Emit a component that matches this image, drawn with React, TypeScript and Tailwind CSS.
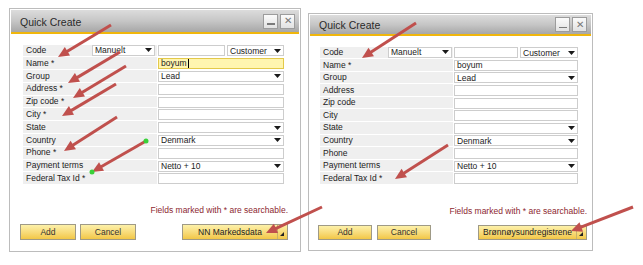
import React from 'react';

type Field = {
  label: string;
  kind: 'text' | 'select';
  value?: string;
  focused?: boolean;
};

const Caret = () => (
  <svg width="7" height="4" viewBox="0 0 7 4" className="shrink-0">
    <path d="M0 0 H7 L3.5 4 Z" fill="#1a1a1a" />
  </svg>
);

const Input = ({ value, select, focused, className = '' }: { value?: string; select?: boolean; focused?: boolean; className?: string }) => (
  <div
    className={`flex h-[11px] items-center justify-between border pl-[2px] pr-[2px] leading-none ${
      focused ? 'border-[#e3c94a] bg-[#fff5b0]' : 'border-[#cdcdcd] bg-white'
    } ${className}`}
  >
    <span className="flex items-center whitespace-nowrap">
      {value}
      {focused && <span className="ml-[1px] inline-block h-[9px] w-[1px] bg-black" />}
    </span>
    {select && <Caret />}
  </div>
);

const WinBtn = ({ children }: { children: React.ReactNode }) => (
  <div className="flex h-[15px] w-[15px] items-center justify-center border border-[#9c9c9c] bg-linear-to-b from-[#fbfbfb] to-[#e2e2e2] text-[10px] leading-none text-[#777]">
    {children}
  </div>
);

const YellowBtn = ({ label, className = '' }: { label: string; className?: string }) => (
  <div
    className={`flex items-center justify-center border border-[#9f9a86] bg-linear-to-b from-[#fdf1a9] to-[#f2c744] text-[8.5px] leading-none text-[#333] ${className}`}
  >
    {label}
  </div>
);

type DialogProps = {
  boxClass: string;
  titleClass: string;
  bodyClass: string;
  rowClass: string;
  labelClass: string;
  codeLabelClass: string;
  manuelClass: string;
  blankClass: string;
  footerClass: string;
  btnClass: string;
  gapClass: string;
  extraBtn: string;
  extraBtnClass: string;
  starred: boolean;
};

const Dialog = (p: DialogProps) => {
  const s = (t: string) => (p.starred ? `${t} *` : t);
  const rows: Field[] = [
    { label: 'Name *', kind: 'text', value: 'boyum', focused: p.starred },
    { label: 'Group', kind: 'select', value: 'Lead' },
    { label: s('Address'), kind: 'text' },
    { label: s('Zip code'), kind: 'text' },
    { label: s('City'), kind: 'text' },
    { label: 'State', kind: 'select' },
    { label: 'Country', kind: 'select', value: 'Denmark' },
    { label: s('Phone'), kind: 'text' },
    { label: 'Payment terms', kind: 'select', value: 'Netto + 10' },
    { label: 'Federal Tax Id *', kind: 'text' },
  ];
  return (
    <div className={`flex shrink-0 flex-col border border-[#bcbcbc] bg-white p-[1px] ${p.boxClass}`}>
      <div className={`flex items-center justify-between bg-linear-to-b from-[#dcdcdc] via-[#c6c6c6] to-[#a7a7a7] pl-[9px] pr-[4px] ${p.titleClass}`}>
        <span className="mt-[2px] text-[10.5px] leading-none text-[#2a2a2a]">Quick Create</span>
        <div className="flex gap-[2px]">
          <WinBtn>
            <span className="mt-[6px] block h-[1.5px] w-[8px] bg-[#7a7a7a]" />
          </WinBtn>
          <WinBtn>✕</WinBtn>
        </div>
      </div>
      <div className="h-[2px] bg-[#f0b60c]" />
      <div className={`flex flex-col text-[8.5px] text-[#222] ${p.bodyClass}`}>
        <div className={`flex items-center ${p.rowClass}`}>
          <div className={`flex h-full items-center border-b border-white bg-[#efefef] pl-[3px] ${p.labelClass}`}>
            <span className={p.codeLabelClass}>Code</span>
            <Input value="Manuelt" select className={p.manuelClass} />
          </div>
          <Input className={`ml-[1px] ${p.blankClass}`} />
          <Input value="Customer" select className="ml-[2px] flex-1" />
        </div>
        {rows.map((r) => (
          <div key={r.label} className={`flex items-center ${p.rowClass}`}>
            <div className={`flex h-full items-center border-b border-white bg-[#efefef] pl-[3px] ${p.labelClass}`}>{r.label}</div>
            <Input value={r.value} select={r.kind === 'select'} focused={r.focused} className="ml-[1px] flex-1" />
          </div>
        ))}
      </div>
      <div className={`mt-auto flex flex-col ${p.footerClass}`}>
        <div className="h-[10px] text-right text-[8.5px] leading-[10px] text-[#8c1f30]">Fields marked with * are searchable.</div>
        <div className="mt-[9px] flex items-center">
          <YellowBtn label="Add" className={p.btnClass} />
          <YellowBtn label="Cancel" className={`${p.gapClass} ${p.btnClass}`} />
          <div className={`ml-auto flex border border-[#9f9a86] bg-linear-to-b from-[#fdf1a9] to-[#f2c744] ${p.extraBtnClass}`}>
            <div className="flex flex-1 items-center justify-center text-[8.5px] leading-none text-[#222]">{p.extraBtn}</div>
            <div className="relative w-[10px] border-l border-[#c9b36a]">
              <svg width="4" height="4" viewBox="0 0 4 4" className="absolute bottom-[3px] right-[3px]">
                <path d="M4 0 V4 H0 Z" fill="#222" />
              </svg>
            </div>
          </div>
        </div>
      </div>
    </div>
  );
};

const Arrow = ({ x1, y1, x2, y2, dots }: { x1: number; y1: number; x2: number; y2: number; dots?: boolean }) => {
  const dx = x2 - x1;
  const dy = y2 - y1;
  const len = Math.hypot(dx, dy);
  const ux = dx / len;
  const uy = dy / len;
  const hl = 11;
  const hw = 5;
  const bx = x2 - ux * hl;
  const by = y2 - uy * hl;
  const nx = -uy;
  const ny = ux;
  return (
    <g>
      <line x1={x1} y1={y1} x2={bx + ux} y2={by + uy} stroke="#c0504d" strokeWidth={3} />
      <path d={`M${x2} ${y2} L${bx + nx * hw} ${by + ny * hw} L${bx - nx * hw} ${by - ny * hw} Z`} fill="#c0504d" />
      {dots && (
        <>
          <circle cx={x1} cy={y1} r={2.5} fill="#3ad13a" />
          <circle cx={x2} cy={y2} r={2.5} fill="#3ad13a" />
        </>
      )}
    </g>
  );
};

export default function App() {
  return (
    <div className="relative flex h-[265px] w-[643px] items-start overflow-hidden bg-white pl-[9px] pt-[8px] font-['Liberation_Sans',Arial,sans-serif]">
      <Dialog
        boxClass="h-[244px] w-[292px]"
        titleClass="h-[22px]"
        bodyClass="pl-[12px] pr-[15px] pt-[10.5px]"
        rowClass="h-[12.8px]"
        labelClass="w-[134px]"
        codeLabelClass="w-[66px]"
        manuelClass="w-[63px]"
        blankClass="w-[67px]"
        footerClass="pl-[9px] pr-[11px] pb-[10px]"
        btnClass="h-[16px] w-[56px]"
        gapClass="ml-[4px]"
        extraBtn="NN Markedsdata"
        extraBtnClass="h-[16px] w-[106px]"
        starred
      />
      <Dialog
        boxClass="ml-[7px] mt-[5px] h-[238px] w-[285px]"
        titleClass="h-[19px]"
        bodyClass="pl-[10px] pr-[13px] pt-[10.5px]"
        rowClass="h-[12.6px]"
        labelClass="w-[133px]"
        codeLabelClass="w-[65px]"
        manuelClass="w-[64px]"
        blankClass="w-[64px]"
        footerClass="pl-[8px] pr-[4px] pb-[9px]"
        btnClass="h-[15px] w-[54px]"
        gapClass="ml-[5px]"
        extraBtn="Brønnøysundregistrene"
        extraBtnClass="h-[15px] w-[109px]"
        starred={false}
      />
      <svg className="pointer-events-none absolute inset-0" width="643" height="265" viewBox="0 0 643 265">
        <Arrow x1={111} y1={25} x2={58} y2={57} />
        <Arrow x1={120} y1={52} x2={68} y2={83} />
        <Arrow x1={126} y1={66} x2={73} y2={98} />
        <Arrow x1={116} y1={84} x2={62} y2={116} />
        <Arrow x1={117} y1={117} x2={64} y2={151} />
        <Arrow x1={146} y1={141} x2={92} y2={172} dots />
        <Arrow x1={322} y1={207} x2={266} y2={233} />
        <Arrow x1={416} y1={23} x2={362} y2={58} />
        <Arrow x1={448} y1={145} x2={395} y2={179} />
        <Arrow x1={633} y1={207} x2={571} y2={231} />
      </svg>
    </div>
  );
}
